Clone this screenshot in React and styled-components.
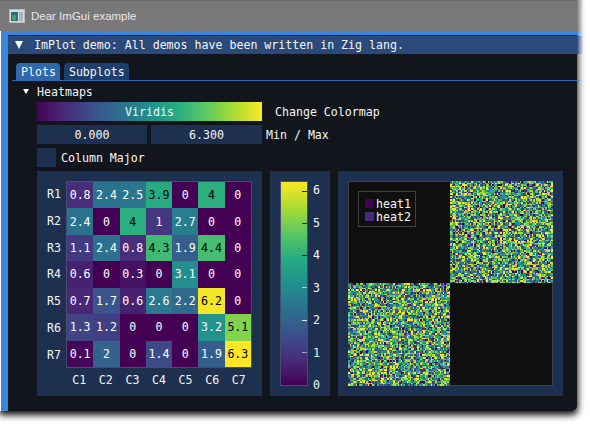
import React, { useMemo } from 'react';
import styled, { createGlobalStyle } from 'styled-components';

const STOPS = [
  [68, 1, 84],
  [71, 44, 122],
  [59, 81, 139],
  [44, 113, 142],
  [33, 144, 141],
  [39, 173, 129],
  [92, 200, 99],
  [170, 220, 50],
  [253, 231, 37],
];

const GRADIENT = (dir) =>
  `linear-gradient(${dir}, ${STOPS.map(c => `rgb(${c.join(',')})`).join(', ')})`;

const VALUES = [
  [0.8, 2.4, 2.5, 3.9, 0, 4, 0],
  [2.4, 0, 4, 1, 2.7, 0, 0],
  [1.1, 2.4, 0.8, 4.3, 1.9, 4.4, 0],
  [0.6, 0, 0.3, 0, 3.1, 0, 0],
  [0.7, 1.7, 0.6, 2.6, 2.2, 6.2, 0],
  [1.3, 1.2, 0, 0, 0, 3.2, 5.1],
  [0.1, 2, 0, 1.4, 0, 1.9, 6.3],
];

const TICKS = [
  { label: 6, tone: '#1c2a10' },
  { label: 5, tone: '#14401c' },
  { label: 4, tone: '#06201a' },
  { label: 3, tone: '#a9d4d0' },
  { label: 2, tone: '#e6eef5' },
  { label: 1, tone: '#a99fd0' },
  { label: 0, tone: 'transparent' },
];

// bits of the window that bleed through the drop shadow on the right
const BLEEDS = [
  { top: 0, height: 31, color: '#787878' },
  { top: 31, height: 4, color: '#3a86dc' },
  { top: 36, height: 18, color: '#294a7a' },
  { top: 80, height: 1, color: '#2e66ad' },
];

function sample(t) {
  const p = Math.min(0.9999, Math.max(0, t)) * (STOPS.length - 1);
  const i = Math.floor(p);
  const f = p - i;
  return STOPS[i].map((v, k) => Math.round(v + (STOPS[i + 1][k] - v) * f));
}

function textColor(rgb) {
  const l = 0.299 * rgb[0] + 0.587 * rgb[1] + 0.114 * rgb[2];
  return l > 127 ? '#000' : '#fff';
}

// one path per colour keeps the svg small
function NoiseMap({ seed }) {
  const paths = useMemo(() => {
    let s = seed;
    const rand = () => {
      s = (s * 1664525 + 1013904223) % 4294967296;
      return s / 4294967296;
    };
    const buckets = STOPS.map(() => '');
    for (let y = 0; y < 68; y++) {
      for (let x = 0; x < 68; x++) {
        // skewed a bit towards green, like the reference
        const i = Math.floor(Math.pow(rand(), 0.8) * STOPS.length);
        buckets[i] += `M${x * 1.5} ${y * 1.5}h1.5v1.5h-1.5z`;
      }
    }
    return buckets;
  }, [seed]);
  return (
    <NoiseSvg viewBox="0 0 102 102" preserveAspectRatio="none" shapeRendering="crispEdges">
      {paths.map((d, i) => (
        <path key={i} d={d} fill={`rgb(${STOPS[i].join(',')})`} />
      ))}
    </NoiseSvg>
  );
}

function App() {
  return (
    <>
      <GlobalStyle />
      <Window>
        <OsTitle>
          <AppIcon viewBox="0 0 16 14">
            <rect x="0.5" y="0.5" width="15" height="13" fill="#d8dcd8" stroke="#b8bcb8" />
            <rect x="2" y="3" width="7" height="9" fill="#2f6f7c" />
            <rect x="3" y="6" width="4" height="5" fill="#3fa070" />
            <rect x="10" y="3" width="4" height="9" fill="#9fb4c4" />
          </AppIcon>
          <OsTitleText>Dear ImGui example</OsTitleText>
        </OsTitle>
        <BlueFrame>
          <Panel>
            <PanelTitle>
              <Arrow $size={10} />
              <span>ImPlot demo: All demos have been written in Zig lang.</span>
            </PanelTitle>
            <TabBar>
              <Tab $active>Plots</Tab>
              <Tab>Subplots</Tab>
            </TabBar>
            <Content>
              <TreeNode>
                <Arrow $size={7} />
                <span>Heatmaps</span>
              </TreeNode>
              <Rows>
                <Row>
                  <ColormapButton>Viridis</ColormapButton>
                  <RowLabel $gap={13}>Change Colormap</RowLabel>
                </Row>
                <Row>
                  <RangeInputs>
                    <NumberBox>0.000</NumberBox>
                    <NumberBox>6.300</NumberBox>
                  </RangeInputs>
                  <RowLabel $gap={4}>Min / Max</RowLabel>
                </Row>
                <Row>
                  <CheckBox />
                  <RowLabel $gap={5}>Column Major</RowLabel>
                </Row>
                <Plots>
                  <PlotCard $width={225}>
                    <HeatmapLayout>
                      <RowLabels>
                        {VALUES.map((_, i) => (
                          <AxisLabel key={i}>R{i + 1}</AxisLabel>
                        ))}
                      </RowLabels>
                      <HeatGrid>
                        {VALUES.flat().map((v, i) => {
                          const rgb = sample(v / 6.3);
                          return (
                            <HeatCell
                              key={i}
                              style={{ background: `rgb(${rgb.join(',')})`, color: textColor(rgb) }}
                            >
                              {v}
                            </HeatCell>
                          );
                        })}
                      </HeatGrid>
                      <span />
                      <ColLabels>
                        {VALUES[0].map((_, i) => (
                          <AxisLabel key={i}>C{i + 1}</AxisLabel>
                        ))}
                      </ColLabels>
                    </HeatmapLayout>
                  </PlotCard>
                  <PlotCard $width={60}>
                    <ColorBarLayout>
                      <ColorBar>
                        {TICKS.map(t => (
                          <Tick key={t.label} style={{ background: t.tone }} />
                        ))}
                      </ColorBar>
                      <BarLabels>
                        {TICKS.map(t => (
                          <BarLabel key={t.label}>{t.label}</BarLabel>
                        ))}
                      </BarLabels>
                    </ColorBarLayout>
                  </PlotCard>
                  <PlotCard $width={225}>
                    <NoiseFrame>
                      <Legend>
                        <LegendRow>
                          <Swatch $color="#440154" />
                          heat1
                        </LegendRow>
                        <LegendRow>
                          <Swatch $color="#472a7a" />
                          heat2
                        </LegendRow>
                      </Legend>
                      <span />
                      <NoiseMap seed={17} />
                      <NoiseMap seed={91} />
                      <span />
                    </NoiseFrame>
                  </PlotCard>
                </Plots>
              </Rows>
            </Content>
          </Panel>
        </BlueFrame>
      </Window>
      {BLEEDS.map(b => (
        <ShadowBleed key={b.top} $top={b.top} $height={b.height} $color={b.color} />
      ))}
    </>
  );
}

const GlobalStyle = createGlobalStyle`
  html, body {
    margin: 0;
    padding: 0;
    width: 590px;
    height: 428px;
    overflow: hidden;
    background: #fff;
  }
`;

const Window = styled.div`
  position: relative;
  width: 577px;
  height: 411px;
  display: flex;
  flex-direction: column;
  border-bottom-right-radius: 5px;
  box-shadow: 0 3px 7px 1px rgba(0, 0, 0, 0.95);
  overflow: hidden;
  font-family: 'DejaVu Sans Mono', 'Liberation Mono', monospace;
  font-size: 11.6px;
  color: #f6f6f6;
`;

const ShadowBleed = styled.div`
  position: absolute;
  left: 577px;
  top: ${p => p.$top}px;
  width: 7px;
  height: ${p => p.$height}px;
  background: linear-gradient(to right, ${p => p.$color}, #fff);
`;

const OsTitle = styled.div`
  height: 31px;
  flex: none;
  display: flex;
  align-items: center;
  gap: 6px;
  padding-left: 9px;
  box-sizing: border-box;
  background: #787878;
  border-top: 1px solid #6a6a6a;
`;

const AppIcon = styled.svg`
  width: 16px;
  height: 14px;
`;

const OsTitleText = styled.span`
  font-family: 'Liberation Sans', Arial, sans-serif;
  font-size: 11.5px;
  color: #e8e8e8;
`;

const BlueFrame = styled.div`
  flex: 1;
  min-height: 0;
  display: flex;
  padding: 4px 0 0 7px;
  margin-left: 1px;
  background: #3a86dc;
`;

const Panel = styled.div`
  flex: 1;
  display: flex;
  flex-direction: column;
  background: #12151c;
  border-top: 1px solid #1c2a44;
`;

const PanelTitle = styled.div`
  height: 18px;
  flex: none;
  display: flex;
  align-items: center;
  gap: 11px;
  padding-left: 7px;
  background: #294a7a;
`;

const Arrow = styled.i`
  flex: none;
  width: 0;
  height: 0;
  border-left: ${p => p.$size / 2 - 0.5}px solid transparent;
  border-right: ${p => p.$size / 2 - 0.5}px solid transparent;
  border-top: ${p => p.$size - 2}px solid #fff;
`;

const TabBar = styled.div`
  margin: 9px 0 0 4px;
  height: 18px;
  flex: none;
  box-sizing: border-box;
  display: flex;
  align-items: stretch;
  gap: 4px;
  padding-left: 4px;
  border-bottom: 1px solid #2e66ad;
`;

const Tab = styled.div`
  padding: 0 4px 0 5px;
  display: flex;
  align-items: center;
  border-radius: 4px 4px 0 0;
  background: ${p => (p.$active ? '#3068ad' : '#1e3f6b')};
`;

const Content = styled.div`
  padding: 4px 0 0 15px;
  display: flex;
  flex-direction: column;
`;

const TreeNode = styled.div`
  height: 13px;
  display: flex;
  align-items: center;
  gap: 8px;
`;

const Rows = styled.div`
  margin: 4px 0 0 14px;
  display: flex;
  flex-direction: column;
  gap: 4px;
`;

const Row = styled.div`
  height: 19px;
  display: flex;
  align-items: center;
`;

const RowLabel = styled.span`
  margin-left: ${p => p.$gap}px;
  white-space: pre;
`;

const ColormapButton = styled.div`
  width: 225px;
  height: 19px;
  display: flex;
  align-items: center;
  justify-content: center;
  background: ${GRADIENT('to right')};
`;

const RangeInputs = styled.div`
  width: 225px;
  display: grid;
  grid-template-columns: 110px 111px;
  gap: 4px;
`;

const NumberBox = styled.div`
  height: 19px;
  display: flex;
  align-items: center;
  justify-content: center;
  background: #1d3050;
`;

const CheckBox = styled.div`
  width: 19px;
  height: 19px;
  background: #1d3050;
`;

const Plots = styled.div`
  display: flex;
  gap: 8px;
`;

const PlotCard = styled.div`
  width: ${p => p.$width}px;
  height: 225px;
  box-sizing: border-box;
  padding: 10px;
  background: #1d3050;
`;

const HeatmapLayout = styled.div`
  display: grid;
  grid-template-columns: 19px 186px;
  grid-template-rows: 187px auto;
`;

const RowLabels = styled.div`
  display: grid;
  grid-template-rows: repeat(7, 1fr);
  align-items: center;
  padding-right: 5px;
`;

const AxisLabel = styled.span`
  text-align: center;
`;

const HeatGrid = styled.div`
  box-sizing: border-box;
  border: 1px solid #4a4a72;
  display: grid;
  grid-template-columns: repeat(7, 1fr);
  grid-template-rows: repeat(7, 1fr);
`;

const HeatCell = styled.div`
  display: flex;
  align-items: center;
  justify-content: center;
`;

const ColLabels = styled.div`
  display: grid;
  grid-template-columns: repeat(7, 1fr);
  margin-top: 5px;
`;

const ColorBarLayout = styled.div`
  display: flex;
  gap: 5px;
  height: 205px;
`;

const ColorBar = styled.div`
  width: 28px;
  height: 205px;
  box-sizing: border-box;
  border: 1px solid #4a4a72;
  background: ${GRADIENT('to top')};
  display: flex;
  flex-direction: column;
  justify-content: space-between;
  align-items: flex-end;
  padding: 9px 0 0;
`;

const Tick = styled.i`
  width: 5px;
  height: 1px;
`;

const BarLabels = styled.div`
  height: 208px;
  margin-top: 3px;
  display: flex;
  flex-direction: column;
  justify-content: space-between;
`;

const BarLabel = styled.span`
  line-height: 13px;
`;

const NoiseFrame = styled.div`
  position: relative;
  width: 205px;
  height: 205px;
  box-shadow: inset 0 0 0 1px #3f3f44;
  background: #0f0f0f;
  display: grid;
  grid-template-columns: 102px 103px;
  grid-template-rows: 102px 103px;
`;

const NoiseSvg = styled.svg`
  display: block;
  width: 100%;
  height: 100%;
`;

const Legend = styled.div`
  position: absolute;
  left: 10px;
  top: 10px;
  box-sizing: border-box;
  width: 58px;
  height: 36px;
  padding: 5px 0 0 6px;
  border: 1px solid #3f3f44;
  display: flex;
  flex-direction: column;
`;

const LegendRow = styled.div`
  height: 13px;
  display: flex;
  align-items: center;
  gap: 2px;
`;

const Swatch = styled.i`
  width: 9px;
  height: 9px;
  background: ${p => p.$color};
`;

export default App;
